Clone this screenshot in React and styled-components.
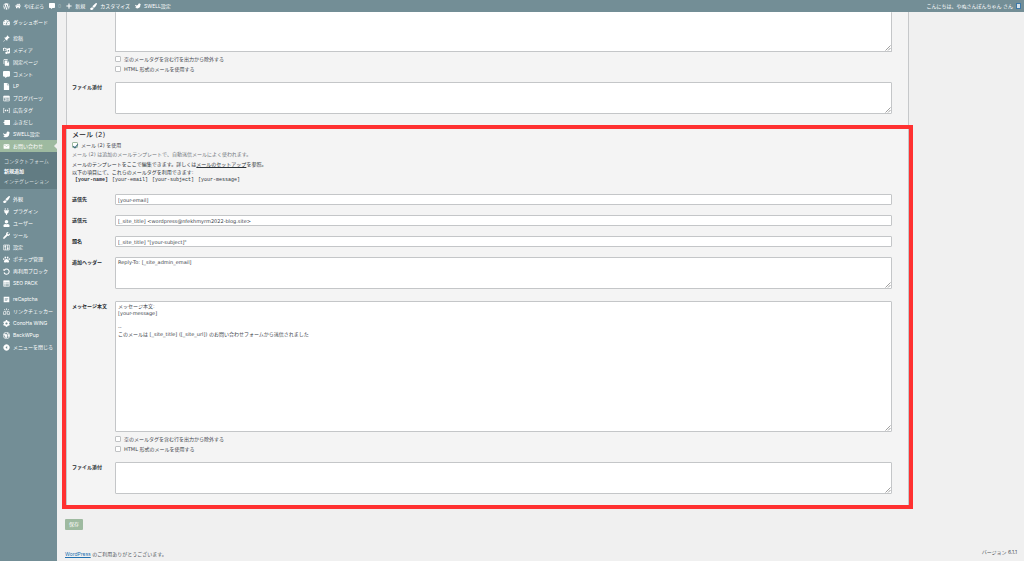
import styled, { createGlobalStyle } from "styled-components";
import {
  FaCog,
  FaCommentAlt,
  FaFile,
  FaHome,
  FaPaintBrush,
  FaPaw,
  FaPlug,
  FaPlus,
  FaTachometerAlt,
  FaUser,
  FaWordpress,
  FaWrench,
} from "react-icons/fa";
import { MdEmail, MdFileCopy } from "react-icons/md";

const GlobalStyle = createGlobalStyle`
  * {
    box-sizing: border-box;
  }

  body {
    margin: 0;
    background-color: #f0f0f0;
    color: #3c434a;
    font-family: "DejaVu Sans", "Noto Sans CJK JP", sans-serif;
    font-size: 5px;
    line-height: 8px;
  }

  input, textarea, button {
    font: inherit;
    color: inherit;
    margin: 0;
  }
`;

const Page = styled.div`
  display: flex;
  flex-direction: column;
  min-height: 100vh;
`;

const AdminBar = styled.header`
  display: flex;
  align-items: center;
  justify-content: space-between;
  height: 12px;
  padding: 0 3px;
  background-color: #738e96;
  font-family: Inter, "Noto Sans CJK JP", sans-serif;
`;

const BarGroup = styled.div`
  display: flex;
  align-items: center;
  gap: 5px;
`;

const BarLink = styled.a`
  display: flex;
  align-items: center;
  gap: 3px;
  color: ${(props) => (props.$dim ? "#a9bcc1" : "#fff")};
  text-decoration: none;
  white-space: nowrap;

  svg {
    width: ${(props) => (props.$large ? 7 : 6)}px;
    height: ${(props) => (props.$large ? 7 : 6)}px;
    color: #fff;
  }
`;

const Avatar = styled.span`
  width: 5px;
  height: 6px;
  border: 1px solid #3d78a8;
  background-color: #d5e2ea;
`;

const Body = styled.div`
  display: flex;
  flex: 1;
`;

const Sidebar = styled.nav`
  width: 57px;
  flex: none;
  padding-top: 4px;
  background-color: #738e96;
  font-family: Inter, "Noto Sans CJK JP", sans-serif;
`;

const MenuGroup = styled.ul`
  list-style: none;
  margin: 0 0 4px;
  padding: 0;
`;

const MenuLink = styled.a`
  position: relative;
  display: flex;
  align-items: center;
  gap: 3px;
  height: 12px;
  padding-left: 3px;
  color: #fff;
  text-decoration: none;
  white-space: nowrap;
  background-color: ${(props) => (props.$active ? "#9ebaa0" : "transparent")};

  svg {
    width: 7px;
    height: 7px;
    flex: none;
  }

  &::after {
    content: "";
    display: ${(props) => (props.$active ? "block" : "none")};
    position: absolute;
    right: 0;
    top: 3px;
    border: 3px solid transparent;
    border-left: 0;
    border-right-color: #f0f0f0;
  }
`;

const SubMenu = styled.ul`
  list-style: none;
  margin: 0;
  padding: 4px 0 3px 4px;
  background-color: #627c83;
`;

const SubLink = styled.a`
  display: block;
  line-height: 10px;
  color: ${(props) => (props.$current ? "#fff" : "#d5dddf")};
  font-weight: ${(props) => (props.$current ? 700 : 400)};
  text-decoration: none;
  white-space: nowrap;
`;

const Main = styled.main`
  display: flex;
  flex-direction: column;
  flex: 1;
  min-width: 0;
  padding: 0 7px 3px 8px;
`;

const Panel = styled.div`
  margin: 0 108px 13px 1px;
  border: 1px solid #c6c8ca;
  border-top: 0;
  background-color: #f4f4f4;
`;

const MailSection = styled.section`
  padding: 0 16px 9px 5px;
  margin-bottom: ${(props) => (props.$marked ? 0 : 4)}px;
`;

/* red frame round the second mail template */
const Frame = styled.div`
  margin: 0 -1px;
  padding: 0 1px;
  outline: 4px solid #ff3131;
`;

const Title = styled.h2`
  margin: 0;
  padding-top: 1px;
  font-size: 7px;
  font-weight: 500;
  line-height: 10px;
  color: #1d2327;
`;

const CheckLabel = styled.label`
  display: flex;
  align-items: center;
  gap: 3px;
  height: 10px;
`;

const CheckBox = styled.input`
  appearance: none;
  display: grid;
  place-items: center;
  width: 6px;
  height: 6px;
  border: 1px solid #c0c2c4;
  border-radius: 1px;
  background-color: #fff;

  &:checked {
    border-color: #9ebaa0;
  }

  &:checked::before {
    content: "";
    width: 2px;
    height: 4px;
    border: solid #3c6a80;
    border-width: 0 1px 1px 0;
    transform: rotate(40deg);
  }
`;

const Description = styled.p`
  margin: 0;
  color: #70757b;
`;

const Legend = styled.div`
  margin: 2px 0 10px;
  color: #2c3338;

  a {
    color: inherit;
  }
`;

const Tags = styled.div`
  display: flex;
  gap: 4px;
  padding-left: 3px;
`;

const Tag = styled.code`
  font-family: "Liberation Mono", monospace;
  font-weight: ${(props) => (props.$used ? 700 : 400)};
`;

const Fields = styled.div`
  display: flex;
  flex-direction: column;
  gap: 10px;
`;

const Row = styled.div`
  display: grid;
  grid-template-columns: 43px 1fr;
`;

const RowLabel = styled.label`
  line-height: 11px;
  font-weight: 700;
  color: #23282d;
  white-space: nowrap;
`;

const TextInput = styled.input`
  width: 100%;
  height: 11px;
  padding: 0 2px;
  border: 1px solid #c4c6c8;
  border-radius: 1px;
  background-color: #fff;
`;

const AreaWrap = styled.div`
  position: relative;
  display: flex;
  margin-bottom: 2px;

  svg {
    position: absolute;
    right: 1px;
    bottom: 1px;
    width: 6px;
    height: 6px;
  }
`;

const TextArea = styled.textarea`
  width: 100%;
  height: ${(props) => props.$height}px;
  padding: 1px 2px;
  border: 1px solid #c4c6c8;
  border-top-width: ${(props) => (props.$cut ? 0 : 1)}px;
  border-radius: 1px;
  background-color: #fff;
  line-height: 7px;
  resize: none;
`;

const Checks = styled.div`
  margin-bottom: -2px;
`;

const SaveButton = styled.button`
  align-self: flex-start;
  height: 11px;
  padding: 0 4px;
  border: 0;
  border-radius: 1px;
  background-color: #9ebaa0;
  color: #fff;
  line-height: 11px;
`;

const Footer = styled.footer`
  display: flex;
  justify-content: space-between;
  align-items: flex-end;
  margin-top: auto;
  color: #50575e;
  font-family: Inter, "Noto Sans CJK JP", sans-serif;

  a {
    color: #2271b1;
  }
`;

const Version = styled.span`
  padding-bottom: 2px;
`;

const Bird = () => (
  <svg viewBox="0 0 20 20" fill="currentColor">
    <path d="M0 6c3 3 7 3 10 1 0-4 3-6 6-5 1 0 2 1 2 2l2 1-2 2c0 7-4 11-10 11-4 0-6-2-7-4 2 0 3 0 4-1-3-1-5-4-5-7z" />
  </svg>
);

const Pin = () => (
  <svg viewBox="0 0 20 20" fill="currentColor">
    <path d="M12 1l7 7-2 1-1-.5-3.500 4c.5 2 0 3-1 4L7.500 12.500 2 19l-1-1 6.500-6L3.500 8c1-1 2.500-1.500 4-1l4-3.500L11 3z" />
  </svg>
);

const Media = () => (
  <svg viewBox="0 0 20 20" fill="currentColor">
    <path
      d="M0 3h2l1-1h3l1 1h3v8H0zM5 4.500a2.500 2.500 0 1 0 .01 0zM11 5l9-2v13a3.500 3 0 1 1-2.500-3V8l-4 1v8a3.500 3 0 1 1-2.500-3z"
      fillRule="evenodd"
    />
  </svg>
);

const Blocks = () => (
  <svg viewBox="0 0 20 20" fill="none" stroke="currentColor" strokeWidth="2">
    <path d="M2 3h16v14H2zM2 8h16M8 8v9M8 12h10" />
    <path d="M2 5h16" strokeWidth="4" />
  </svg>
);

const Brackets = () => (
  <svg viewBox="0 0 20 20" fill="none" stroke="currentColor" strokeWidth="2">
    <path d="M4 4H1v12h3M16 4h3v12h-3" />
    <path d="M5 10h10" strokeWidth="4" strokeDasharray="4 2" />
  </svg>
);

const Balloon = () => (
  <svg viewBox="0 0 20 20" fill="currentColor">
    <path d="M4 3h16v14H4v-5l-4-2 4-2z" />
  </svg>
);

const Sliders = () => (
  <svg viewBox="0 0 20 20" fill="none" stroke="currentColor" strokeWidth="2">
    <path d="M2 3h16v14H2zM7 3v14M13 3v14" />
    <path d="M4 8h5M11 12h5" strokeWidth="3" />
  </svg>
);

const Update = () => (
  <svg viewBox="0 0 20 20" fill="none" stroke="currentColor" strokeWidth="3">
    <path d="M4 6a7.500 7.500 0 1 1-1 7" />
    <path d="M1 2v6h6z" fill="currentColor" stroke="none" />
  </svg>
);

const ListTable = () => (
  <svg viewBox="0 0 20 20" fill="none" stroke="currentColor" strokeWidth="2">
    <path d="M2 2h16v16H2zM2 10h16M2 14h16M6 6v12" />
    <path d="M2 5h16" strokeWidth="5" />
  </svg>
);

const Sheet = () => (
  <svg viewBox="0 0 20 20" fill="currentColor" fillRule="evenodd">
    <path d="M2 2h16v16H2zM5 7v2h10V7zM5 11v2h7v-2z" />
  </svg>
);

const LinkCheck = () => (
  <svg viewBox="0 0 20 20" fill="none" stroke="currentColor" strokeWidth="2">
    <path d="M8 10H4a3 3 0 0 0-3 3v5h7zM12 10h4a3 3 0 0 1 3 3v5h-7zM10 1v5M4 3l2 4M16 3l-2 4" />
  </svg>
);

const Globe = () => (
  <svg viewBox="0 0 20 20" fill="none" stroke="currentColor" strokeWidth="2">
    <circle cx="10" cy="10" r="9" />
    <path d="M3 6l7 1 2 4-3 6-3-5zM12 2l1 4 5 3-2 5" fill="currentColor" />
  </svg>
);

const Collapse = () => (
  <svg viewBox="0 0 20 20" fill="currentColor" fillRule="evenodd">
    <path d="M10 1a9 9 0 1 0 .01 0zM12 6v8l-5-4z" />
  </svg>
);

const Grip = () => (
  <svg viewBox="0 0 6 6" stroke="#777" strokeWidth="0.700">
    <path d="M0.500 5.500l5-5M3 5.500L5.500 3" />
  </svg>
);

const contentMenu = [
  { icon: Pin, name: "投稿" },
  { icon: Media, name: "メディア" },
  { icon: MdFileCopy, name: "固定ページ" },
  { icon: FaCommentAlt, name: "コメント" },
  { icon: FaFile, name: "LP" },
  { icon: Blocks, name: "ブログパーツ" },
  { icon: Brackets, name: "広告タグ" },
  { icon: Balloon, name: "ふきだし" },
  { icon: Bird, name: "SWELL設定" },
  {
    icon: MdEmail,
    name: "お問い合わせ",
    sub: ["コンタクトフォーム", "新規追加", "インテグレーション"],
  },
];

const settingsMenu = [
  { icon: FaPaintBrush, name: "外観" },
  { icon: FaPlug, name: "プラグイン" },
  { icon: FaUser, name: "ユーザー" },
  { icon: FaWrench, name: "ツール" },
  { icon: Sliders, name: "設定" },
  { icon: FaPaw, name: "ポチップ管理" },
  { icon: Update, name: "再利用ブロック" },
  { icon: ListTable, name: "SEO PACK" },
];

const extraMenu = [
  { icon: Sheet, name: "reCaptcha" },
  { icon: LinkCheck, name: "リンクチェッカー" },
  { icon: FaCog, name: "ConoHa WING" },
  { icon: Globe, name: "BackWPup" },
  { icon: Collapse, name: "メニューを閉じる" },
];

const messageBody = `メッセージ本文:
[your-message]

--
このメールは [_site_title] ([_site_url]) のお問い合わせフォームから送信されました`;

const Menu = ({ items }) => (
  <MenuGroup>
    {items.map(({ icon: Icon, name, sub }) => (
      <li key={name}>
        <MenuLink href="#" $active={Boolean(sub)}>
          <Icon />
          {name}
        </MenuLink>
        {sub && (
          <SubMenu>
            {sub.map((item) => (
              <li key={item}>
                <SubLink href="#" $current={item === "新規追加"}>
                  {item}
                </SubLink>
              </li>
            ))}
          </SubMenu>
        )}
      </li>
    ))}
  </MenuGroup>
);

const InputRow = ({ id, label, value }) => (
  <Row>
    <RowLabel htmlFor={id}>{label}</RowLabel>
    <TextInput id={id} type="text" defaultValue={value} />
  </Row>
);

const AreaRow = ({ id, label, value, height = 32, cut, checks }) => (
  <Row>
    {label ? <RowLabel htmlFor={id}>{label}</RowLabel> : <span />}
    <div>
      <AreaWrap>
        <TextArea
          id={id}
          defaultValue={value}
          $height={height}
          $cut={cut}
          aria-label={label ? undefined : "メッセージ本文"}
        />
        <Grip />
      </AreaWrap>
      {checks && (
        <Checks>
          <CheckLabel>
            <CheckBox type="checkbox" />
            空のメールタグを含む行を出力から除外する
          </CheckLabel>
          <CheckLabel>
            <CheckBox type="checkbox" />
            HTML 形式のメールを使用する
          </CheckLabel>
        </Checks>
      )}
    </div>
  </Row>
);

const App = () => {
  return (
    <Page>
      <GlobalStyle />
      <AdminBar>
        <BarGroup>
          <BarLink href="#" $large aria-label="WordPress">
            <FaWordpress />
          </BarLink>
          <BarLink href="#">
            <FaHome />
            やぼぷろ
          </BarLink>
          <BarLink href="#" $dim>
            <FaCommentAlt />0
          </BarLink>
          <BarLink href="#">
            <FaPlus />
            新規
          </BarLink>
          <BarLink href="#" $large>
            <FaPaintBrush />
            カスタマイズ
          </BarLink>
          <BarLink href="#">
            <Bird />
            SWELL設定
          </BarLink>
        </BarGroup>
        <BarLink href="#">
          こんにちは、やぬさんぽんちゃん さん
          <Avatar />
        </BarLink>
      </AdminBar>
      <Body>
        <Sidebar>
          <Menu items={[{ icon: FaTachometerAlt, name: "ダッシュボード" }]} />
          <Menu items={contentMenu} />
          <Menu items={settingsMenu} />
          <Menu items={extraMenu} />
        </Sidebar>
        <Main>
          <Panel>
            <MailSection>
              <Fields>
                <AreaRow id="mail-body" height={40} cut checks />
                <AreaRow id="mail-files" label="ファイル添付" />
              </Fields>
            </MailSection>
            <Frame>
              <MailSection $marked>
                <Title>メール (2)</Title>
                <CheckLabel>
                  <CheckBox type="checkbox" defaultChecked />
                  メール (2) を使用
                </CheckLabel>
                <Description>
                  メール (2)
                  は追加のメールテンプレートで、自動送信メールによく使われます。
                </Description>
                <Legend>
                  メールのテンプレートをここで編集できます。詳しくは
                  <a href="#">メールのセットアップ</a>を参照。
                  <br />
                  以下の項目にて、これらのメールタグを利用できます:
                  <Tags>
                    <Tag $used>[your-name]</Tag>
                    <Tag>[your-email]</Tag>
                    <Tag>[your-subject]</Tag>
                    <Tag>[your-message]</Tag>
                  </Tags>
                </Legend>
                <Fields>
                  <InputRow id="to" label="送信先" value="[your-email]" />
                  <InputRow
                    id="from"
                    label="送信元"
                    value="[_site_title] <wordpress@nfekhmyrm2022-blog.site>"
                  />
                  <InputRow
                    id="subject"
                    label="題名"
                    value={'[_site_title] "[your-subject]"'}
                  />
                  <AreaRow
                    id="headers"
                    label="追加ヘッダー"
                    value="Reply-To: [_site_admin_email]"
                  />
                  <AreaRow
                    id="body"
                    label="メッセージ本文"
                    value={messageBody}
                    height={131}
                    checks
                  />
                  <AreaRow id="files" label="ファイル添付" />
                </Fields>
              </MailSection>
            </Frame>
          </Panel>
          <SaveButton type="button">保存</SaveButton>
          <Footer>
            <span>
              <a href="#">WordPress</a> のご利用ありがとうございます。
            </span>
            <Version>バージョン 6.1.1</Version>
          </Footer>
        </Main>
      </Body>
    </Page>
  );
};

export default App;
